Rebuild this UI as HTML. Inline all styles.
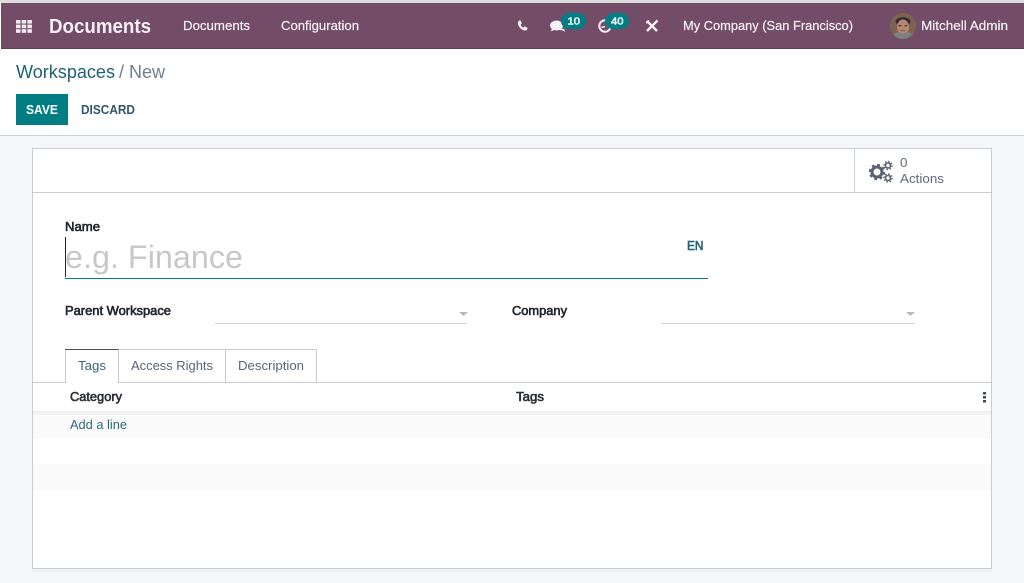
<!DOCTYPE html>
<html><head><meta charset="utf-8"><title>Workspaces / New</title>
<style>
html,body{margin:0;padding:0;background:#fff;overflow:hidden}
svg{display:block}
text{font-family:"Liberation Sans",sans-serif}
.m{stroke-width:.6px;paint-order:stroke}
</style></head><body>
<svg width="1024" height="583" viewBox="0 0 1024 583" xmlns="http://www.w3.org/2000/svg">
<rect width="1024" height="583" fill="#fff"/>
<rect width="1024" height="3" fill="#dcdcdc"/>
<rect x="1" y="3" width="1023" height="45" fill="#734d68"/>
<rect x="1" y="48" width="1023" height="1" fill="#5b3f55"/>
<!-- apps grid -->
<g fill="#f3ecf1">
<rect x="16" y="20" width="4.500" height="3.600"/><rect x="21.700" y="20" width="4.500" height="3.600"/><rect x="27.400" y="20" width="4.500" height="3.600"/>
<rect x="16" y="24.600" width="4.500" height="3.600"/><rect x="21.700" y="24.600" width="4.500" height="3.600"/><rect x="27.400" y="24.600" width="4.500" height="3.600"/>
<rect x="16" y="29.200" width="4.500" height="3.600"/><rect x="21.700" y="29.200" width="4.500" height="3.600"/><rect x="27.400" y="29.200" width="4.500" height="3.600"/>
</g>
<g fill="#f6f0f4">
<text x="49" y="33" font-size="20" font-weight="bold" textLength="102" lengthAdjust="spacingAndGlyphs">Documents</text>
<text x="183" y="30" font-size="13" stroke="#f6f0f4" style="stroke-width:.2px" textLength="67" lengthAdjust="spacingAndGlyphs">Documents</text>
<text x="281" y="30" font-size="13" stroke="#f6f0f4" style="stroke-width:.2px" textLength="78" lengthAdjust="spacingAndGlyphs">Configuration</text>
<text x="683" y="30" font-size="13" stroke="#f6f0f4" style="stroke-width:.2px" textLength="170" lengthAdjust="spacingAndGlyphs">My Company (San Francisco)</text>
<text x="921" y="30" font-size="13" stroke="#f6f0f4" style="stroke-width:.2px" textLength="87" lengthAdjust="spacingAndGlyphs">Mitchell Admin</text>
</g>
<!-- phone -->
<path d="M518.800 20.800c.9-.6 1.700-.5 2.100.4l.8 1.700c.2.500 0 1.100-.5 1.400l-.7.500c.6 1.400 1.500 2.300 2.800 2.900l.6-.7c.3-.4.900-.6 1.400-.4l1.600.9c.8.500.8 1.200.2 2-.9 1.100-2.200 1.200-3.600.7-2.700-1-4.500-3-5.400-5.700-.4-1.300-.2-2.600.7-3.700z" fill="#f6f0f4"/>
<!-- chat -->
<ellipse cx="556.500" cy="25.500" rx="6.500" ry="5" fill="#f6f0f4"/>
<path d="M552 28l-1 3.500 4-2z" fill="#f6f0f4"/>
<path d="M560 28.500c2 .2 4 .4 4.500 1.300l.5 2-3-1.500-3.500-.3z" fill="#f6f0f4"/>
<rect x="561" y="13" width="25" height="16" rx="8" fill="#017e84"/>
<text x="567.500" y="24.500" font-size="10.500" class="m" stroke="#eef6f6" fill="#eef6f6" textLength="12.500" lengthAdjust="spacingAndGlyphs">10</text>
<!-- clock -->
<circle cx="605" cy="26" r="5.700" fill="none" stroke="#f6f0f4" stroke-width="2"/>
<path d="M601.500 27.500l3.500-1" fill="none" stroke="#f6f0f4" stroke-width="1.500"/>
<rect x="605" y="13" width="24" height="16" rx="8" fill="#017e84"/>
<text x="611" y="24.500" font-size="10.500" class="m" stroke="#eef6f6" fill="#eef6f6" textLength="12.500" lengthAdjust="spacingAndGlyphs">40</text>
<!-- tools -->
<path d="M647 21l10 10M657.500 20.500l-10.500 10.500" stroke="#f8f3f6" stroke-width="2.400" fill="none"/>
<path d="M646 23.500a3 3 0 0 1 3.500-3.500l-1.500 2 1 1z" fill="#f8f3f6"/>
<!-- avatar -->
<circle cx="903" cy="26" r="13" fill="#7d6250"/>
<path d="M895.500 21c2-5 13-5 15 0l-1 3c-4-2.500-9-2.500-13 0z" fill="#2f2a35"/>
<ellipse cx="903" cy="27" rx="6" ry="7.500" fill="#b98672"/>
<rect x="898.500" y="25" width="3" height="1.300" fill="#4a3a3e"/>
<rect x="904.500" y="25" width="3" height="1.300" fill="#4a3a3e"/>
<rect x="900.500" y="30" width="5" height="1.200" fill="#8f5a58"/>
<path d="M893 34.300a13 13 0 0 0 20 0l-5-2.500-5 2-5-2z" fill="#7b8080"/>
<!-- breadcrumb -->
<text x="16" y="78" font-size="18" fill="#1f6177" textLength="99" lengthAdjust="spacingAndGlyphs">Workspaces</text>
<text x="119" y="78" font-size="18" fill="#6c7f8e" textLength="46" lengthAdjust="spacingAndGlyphs">/ New</text>
<rect x="16" y="94" width="52" height="31" fill="#017e84"/>
<text x="26" y="114" font-size="12.500" font-weight="bold" fill="#fff" textLength="32" lengthAdjust="spacingAndGlyphs">SAVE</text>
<text x="81" y="114" font-size="12.500" font-weight="bold" fill="#33566b" textLength="54" lengthAdjust="spacingAndGlyphs">DISCARD</text>
<!-- content bg -->
<rect x="0" y="135" width="1024" height="448" fill="#f5f6fa"/>
<rect x="0" y="135" width="1024" height="1" fill="#cfd1d8"/>
<!-- sheet -->
<rect x="32" y="569" width="960" height="3" fill="#eff0f4"/>
<rect x="32.500" y="148.500" width="959" height="420" fill="#fff" stroke="#c9ccd3"/>
<rect x="33" y="192" width="958" height="1" fill="#c9ccd3"/>
<rect x="854" y="149" width="1" height="43" fill="#cfd1d8"/>
<!-- gears -->
<g fill="none" stroke="#5a6270">
<circle cx="877" cy="172" r="5" stroke-width="3"/>
<circle cx="877" cy="172" r="7.200" stroke-width="2" stroke-dasharray="2.800 2.850"/>
<circle cx="888" cy="165.500" r="2.500" stroke-width="1.600"/>
<circle cx="888" cy="165.500" r="4" stroke-width="1.400" stroke-dasharray="1.600 1.540"/>
<circle cx="888" cy="178" r="2.500" stroke-width="1.600"/>
<circle cx="888" cy="178" r="4" stroke-width="1.400" stroke-dasharray="1.600 1.540"/>
</g>
<text x="900" y="167" font-size="13" fill="#5f6b7a" textLength="7.500" lengthAdjust="spacingAndGlyphs">0</text>
<text x="900" y="183" font-size="13" fill="#5f6b7a" textLength="44" lengthAdjust="spacingAndGlyphs">Actions</text>
<!-- form -->
<text x="65" y="231" font-size="12.500" class="m" stroke="#20262e" fill="#20262e" textLength="35" lengthAdjust="spacingAndGlyphs">Name</text>
<text x="65" y="268" font-size="32" fill="#c8c8c8" textLength="178" lengthAdjust="spacingAndGlyphs">e.g. Finance</text>
<rect x="65" y="237" width="1" height="40" fill="#23262e"/>
<rect x="65" y="278" width="643" height="1" fill="#017e84"/>
<text x="687" y="250" font-size="12.500" class="m" stroke="#1f5f7a" fill="#1f5f7a" textLength="16.500" lengthAdjust="spacingAndGlyphs">EN</text>
<text x="65" y="315" font-size="12.500" class="m" stroke="#20262e" fill="#20262e" textLength="106" lengthAdjust="spacingAndGlyphs">Parent Workspace</text>
<rect x="215" y="323" width="252" height="1" fill="#cfcfcf"/>
<path d="M459 312h9l-4.500 4z" fill="#b9b9b9"/>
<text x="512" y="315" font-size="12.500" class="m" stroke="#20262e" fill="#20262e" textLength="55" lengthAdjust="spacingAndGlyphs">Company</text>
<rect x="662" y="323" width="252" height="1" fill="#cfcfcf"/>
<path d="M906 312h9l-4.500 4z" fill="#b9b9b9"/>
<!-- tabs -->
<rect x="33" y="382" width="958" height="1" fill="#c9ccd3"/>
<path d="M65.500 383V349.500H118.500V383" fill="#fff" stroke="#c9ccd3"/>
<rect x="65" y="349" width="54" height="1" fill="#5f4a5d"/>
<rect x="66" y="382" width="52" height="1" fill="#fff"/>
<path d="M118.500 349.500H225.500V382M225.500 349.500H316.500V382" fill="none" stroke="#c9ccd3"/>
<text x="78" y="370" font-size="13" fill="#3b6478" textLength="28" lengthAdjust="spacingAndGlyphs">Tags</text>
<text x="131" y="370" font-size="13" fill="#586676" textLength="82" lengthAdjust="spacingAndGlyphs">Access Rights</text>
<text x="238" y="370" font-size="13" fill="#586676" textLength="66" lengthAdjust="spacingAndGlyphs">Description</text>
<!-- table -->
<text x="70" y="401" font-size="12.500" class="m" stroke="#2b2f36" fill="#2b2f36" textLength="52" lengthAdjust="spacingAndGlyphs">Category</text>
<text x="516" y="401" font-size="12.500" class="m" stroke="#2b2f36" fill="#2b2f36" textLength="28" lengthAdjust="spacingAndGlyphs">Tags</text>
<g fill="#3f4a57"><rect x="983" y="392" width="3" height="2.500"/><rect x="983" y="396" width="3" height="2.500"/><rect x="983" y="400" width="3" height="2.500"/></g>
<rect x="33" y="411" width="958" height="1" fill="#eeeeef"/>
<rect x="33" y="412" width="958" height="3" fill="#f3f3f4"/>
<rect x="33" y="415" width="958" height="23" fill="#fafafa"/>
<rect x="33" y="464" width="958" height="27" fill="#fafafa"/>
<text x="70" y="429" font-size="13" fill="#2a6a7e" textLength="57" lengthAdjust="spacingAndGlyphs">Add a line</text>
</svg>
</body></html>
